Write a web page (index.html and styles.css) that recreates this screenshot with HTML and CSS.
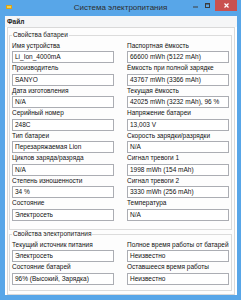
FILE: index.html
```html
<!DOCTYPE html>
<html lang="ru">
<head>
<meta charset="utf-8">
<title>Система электропитания</title>
<link rel="stylesheet" href="styles.css">
</head>
<body>
<div class="window">
  <div class="titlebar">
    <div class="tb-left">
      <svg class="appicon" width="6" height="4" viewBox="0 0 6 4"><rect x="0.5" y="0.5" width="5" height="3" fill="#f6d24a" stroke="#d9a21c" stroke-width="1"/></svg>
    </div>
    <div class="title">Система электропитания</div>
    <div class="controls">
      <span class="btn min"><svg width="5" height="5" viewBox="0 0 5 5"><rect x="0" y="3.5" width="5" height="1" fill="#3c3c3c"/></svg></span>
      <span class="btn max"><svg width="5" height="5" viewBox="0 0 5 5"><rect x="0.5" y="0.5" width="4" height="4" fill="none" stroke="#3c3c3c" stroke-width="1"/><rect x="0" y="0" width="5" height="1.5" fill="#3c3c3c"/></svg></span>
      <span class="btn close"><svg width="5" height="5" viewBox="0 0 5 5"><path d="M0.5 0.5 L4.5 4.5 M4.5 0.5 L0.5 4.5" stroke="#fff" stroke-width="1.2"/></svg></span>
    </div>
  </div>
  <div class="client">
    <div class="menubar"><span class="menuitem">Файл</span></div>
    <div class="panel">
      <fieldset class="group g1">
        <legend>Свойства батареи</legend>
        <div class="fields">
          <div class="field"><div class="label">Имя устройства</div><div class="box">Li_Ion_4000mA</div></div>
          <div class="field"><div class="label">Паспортная ёмкость</div><div class="box">66600 mWh (5122 mAh)</div></div>
          <div class="field"><div class="label">Производитель</div><div class="box">SANYO</div></div>
          <div class="field"><div class="label">Ёмкость при полной зарядке</div><div class="box">43767 mWh (3366 mAh)</div></div>
          <div class="field"><div class="label">Дата изготовления</div><div class="box">N/A</div></div>
          <div class="field"><div class="label">Текущая ёмкость</div><div class="box">42025 mWh (3232 mAh), 96 %</div></div>
          <div class="field"><div class="label">Серийный номер</div><div class="box">248C</div></div>
          <div class="field"><div class="label">Напряжение батареи</div><div class="box">13,003 V</div></div>
          <div class="field"><div class="label">Тип батареи</div><div class="box">Перезаряжаемая Lion</div></div>
          <div class="field"><div class="label">Скорость зарядки/разрядки</div><div class="box">N/A</div></div>
          <div class="field"><div class="label">Циклов заряда/разряда</div><div class="box">N/A</div></div>
          <div class="field"><div class="label">Сигнал тревоги 1</div><div class="box">1998 mWh (154 mAh)</div></div>
          <div class="field"><div class="label">Степень изношенности</div><div class="box">34 %</div></div>
          <div class="field"><div class="label">Сигнал тревоги 2</div><div class="box">3330 mWh (256 mAh)</div></div>
          <div class="field"><div class="label">Состояние</div><div class="box">Электросеть</div></div>
          <div class="field"><div class="label">Температура</div><div class="box">N/A</div></div>
        </div>
      </fieldset>
      <fieldset class="group g2">
        <legend>Свойства электропитания</legend>
        <div class="fields">
          <div class="field"><div class="label">Текущий источник питания</div><div class="box">Электросеть</div></div>
          <div class="field"><div class="label">Полное время работы от батарей</div><div class="box">Неизвестно</div></div>
          <div class="field"><div class="label">Состояние батарей</div><div class="box">96% (Высокий, Зарядка)</div></div>
          <div class="field"><div class="label">Оставшееся время работы</div><div class="box">Неизвестно</div></div>
        </div>
      </fieldset>
    </div>
  </div>
</div>
</body>
</html>
```
FILE: styles.css
```css
html, body {
  margin: 0;
  padding: 0;
}
body {
  width: 241px;
  height: 300px;
  overflow: hidden;
  font-family: "Liberation Sans", Arial, sans-serif;
  color: #000;
}
.window {
  width: 241px;
  height: 300px;
  background: #58a6e8;
  display: flex;
  flex-direction: column;
}
.titlebar {
  height: 16px;
  flex: none;
  display: grid;
  grid-template-columns: 1fr auto 1fr;
  align-items: start;
}
.tb-left {
  display: flex;
  padding: 5px 0 0 6px;
}
.appicon {
  display: block;
}
.title {
  font-size: 8px;
  line-height: 15px;
  color: #2d2d2d;
  white-space: nowrap;
}
.controls {
  justify-self: end;
  display: flex;
  margin-right: 4px;
}
.btn {
  height: 11px;
  display: flex;
  align-items: center;
  justify-content: center;
}
.btn.min, .btn.max {
  width: 12px;
}
.btn.max {
  margin-right: 2px;
}
.btn.close {
  width: 22px;
  background: #c9514f;
}
.btn svg {
  display: block;
}
.client {
  flex: 1;
  margin: 0 4px 5px 5px;
  background: #fff;
  display: flex;
  flex-direction: column;
}
.menubar {
  height: 11px;
  flex: none;
  background: #f5f6f7;
  display: flex;
  align-items: center;
  padding-left: 2px;
}
.menuitem {
  font-size: 6.5px;
  font-weight: bold;
  color: #1e1e1e;
}
.panel {
  flex: 1;
  margin: 0 2px;
  border: 1px solid #d9d9d9;
  padding: 3px 2px 0 1px;
  background: #fdfdfd;
}
.group {
  margin: 0;
  border: 1px solid #dcdcdc;
  padding: 1.5px 2px 8.5px 2px;
  min-inline-size: 0;
}
.group.g2 {
  padding-bottom: 5.5px;
}
.group legend {
  padding: 0 1px;
  margin: 0;
  font-size: 6.5px;
  line-height: 8px;
  height: 8px;
  color: #1a1a1a;
}
.fields {
  display: grid;
  grid-template-columns: 102px 102px;
  column-gap: 13px;
}
.label {
  height: 10.5px;
  line-height: 10.5px;
  font-size: 6.5px;
  white-space: nowrap;
  color: #111;
}
.box {
  height: 12px;
  box-sizing: border-box;
  border: 1px solid #abadb3;
  background: #fff;
  padding-left: 2px;
  font-size: 6.5px;
  line-height: 10px;
  white-space: nowrap;
  overflow: hidden;
  color: #111;
}
```
